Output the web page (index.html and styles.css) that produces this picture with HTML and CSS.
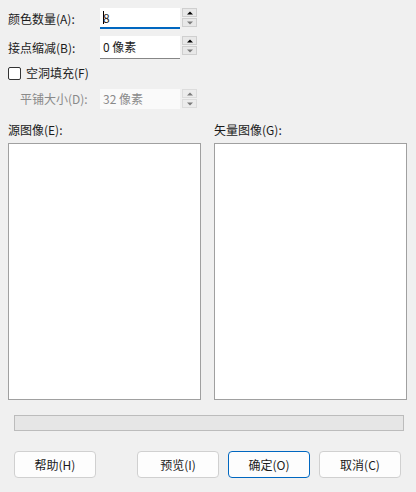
FILE: index.html
```html
<!DOCTYPE html>
<html lang="zh">
<head>
<meta charset="utf-8">
<link rel="stylesheet" href="styles.css">
</head>
<body>
<div class="dialog">
  <div class="row r1">
    <label class="lbl">颜色数量(A):</label>
    <div class="field focus"><span class="caret"></span>8</div>
    <div class="spin"><span class="sb up"></span><span class="sb down dim"></span></div>
  </div>
  <div class="row r2">
    <label class="lbl">接点缩减(B):</label>
    <div class="field line">0 像素</div>
    <div class="spin"><span class="sb up"></span><span class="sb down dim"></span></div>
  </div>
  <div class="check">
    <span class="box"></span><span>空洞填充(F)</span>
  </div>
  <div class="row r4 disabled">
    <label class="lbl indent">平铺大小(D):</label>
    <div class="field">32 像素</div>
    <div class="spin"><span class="sb up dim"></span><span class="sb down dim"></span></div>
  </div>
  <div class="panels">
    <div class="pcol"><div class="plabel">源图像(E):</div><div class="pbox"></div></div>
    <div class="pcol"><div class="plabel">矢量图像(G):</div><div class="pbox"></div></div>
  </div>
  <div class="progress"></div>
  <div class="buttons">
    <button class="btn">帮助(H)</button>
    <div class="spacer"></div>
    <button class="btn">预览(I)</button>
    <button class="btn primary">确定(O)</button>
    <button class="btn">取消(C)</button>
  </div>
</div>
</body>
</html>
```
FILE: styles.css
```css
html, body {
  margin: 0;
  padding: 0;
  background: #f0f0f0;
}
body {
  width: 416px;
  height: 492px;
  font-family: "Noto Sans CJK SC", "Noto Sans", sans-serif;
  font-size: 12px;
  color: #1b1b1b;
}
.dialog {
  padding: 8px 8px 0 8px;
  display: flex;
  flex-direction: column;
}
.row {
  display: flex;
  align-items: stretch;
}
.r1 { height: 21px; }
.r2 { height: 23px; margin-top: 7px; }
.r4 { height: 20px; margin-top: 7px; }
.lbl {
  width: 92px;
  display: flex;
  align-items: center;
  line-height: 1;
}
.lbl.indent { padding-left: 12px; width: 80px; }
.field {
  width: 80px;
  background: #fff;
  display: flex;
  align-items: center;
  padding-left: 3px;
  box-sizing: border-box;
  position: relative;
  line-height: 1;
}
.field.focus { border-bottom: 2px solid #0067c0; }
.field.line { border-bottom: 1px solid #868686; }
.caret {
  display: inline-block;
  width: 1px;
  height: 13px;
  background: #000;
  margin-right: -1px;
}
.spin {
  width: 15px;
  margin-left: 2px;
  display: flex;
  flex-direction: column;
  gap: 1px;
}
.sb {
  height: 9px;
  box-sizing: border-box;
  border: 1px solid #cfcfcf;
  background: #e8e8e8;
  position: relative;
}
.sb::after {
  content: "";
  position: absolute;
  left: 50%;
  top: 50%;
  width: 0;
  height: 0;
  transform: translate(-50%, -50%);
  border-left: 3px solid transparent;
  border-right: 3px solid transparent;
}
.up::after { border-bottom: 3px solid #000; }
.down::after { border-top: 3px solid #000; }
.up.dim::after { border-bottom-color: #7a7a7a; }
.down.dim::after { border-top-color: #7a7a7a; }
.disabled { color: #8a8a8a; }
.disabled .field { background: #fafafa; }
.disabled .sb { background: #ececec; border-color: #dcdcdc; }
.check {
  display: flex;
  align-items: center;
  gap: 5px;
  margin-top: 5px;
  height: 18px;
  line-height: 1;
}
.box {
  width: 11px;
  height: 11px;
  border: 1px solid #333;
  border-radius: 2px;
  background: #fff;
}
.panels {
  display: flex;
  gap: 13px;
  margin-top: 15px;
}
.pcol {
  width: 193px;
  display: flex;
  flex-direction: column;
}
.plabel {
  height: 17px;
  line-height: 1;
  margin-bottom: 2px;
}
.pbox {
  height: 257px;
  box-sizing: border-box;
  border: 1px solid #a0a0a0;
  background: #fff;
}
.progress {
  margin: 15px 4px 0 6px;
  height: 16px;
  box-sizing: border-box;
  border: 1px solid #bcbcbc;
  background: #e6e6e6;
}
.buttons {
  display: flex;
  margin: 20px 6px 0 6px;
  gap: 9px;
}
.spacer { width: 23px; }
.btn {
  width: 82px;
  height: 27px;
  box-sizing: border-box;
  border: 1px solid #d0d0d0;
  border-radius: 4px;
  background: #fdfdfd;
  font-family: inherit;
  font-size: 12px;
  color: #1b1b1b;
  padding: 0;
  line-height: 1;
}
.btn.primary { border-color: #0067c0; }
```
